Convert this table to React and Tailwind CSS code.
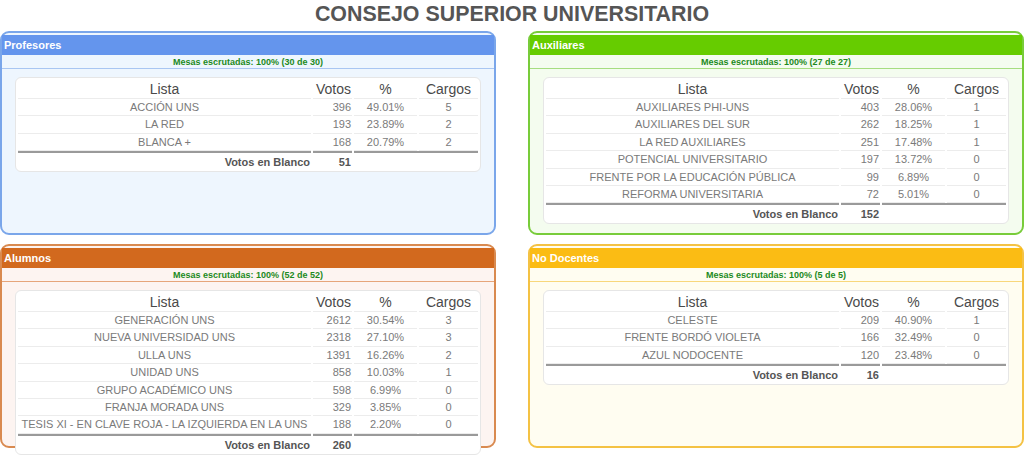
import React from "react";

const themes = {
  blue: {
    panel: "border-[#7aa6ea] bg-[#eef6fe]",
    header: "bg-[#6495ed]",
    line: "border-[#a9c6f2]",
  },
  green: {
    panel: "border-[#78cc3a] bg-[#f4fcef]",
    header: "bg-[#66cc00]",
    line: "border-[#a6dd80]",
  },
  orange: {
    panel: "border-[#d98a50] bg-[#fdf4f1]",
    header: "bg-[#d2691e]",
    line: "border-[#e6a57a]",
  },
  yellow: {
    panel: "border-[#f4c244] bg-[#fffdf1]",
    header: "bg-[#fbbc14]",
    line: "border-[#f8d77c]",
  },
};

const panels = [
  {
    title: "Profesores",
    theme: "blue",
    mesas: "Mesas escrutadas: 100% (30 de 30)",
    rows: [
      ["ACCIÓN UNS", 396, "49.01%", 5],
      ["LA RED", 193, "23.89%", 2],
      ["BLANCA +", 168, "20.79%", 2],
    ],
    blanco: 51,
  },
  {
    title: "Auxiliares",
    theme: "green",
    mesas: "Mesas escrutadas: 100% (27 de 27)",
    rows: [
      ["AUXILIARES PHI-UNS", 403, "28.06%", 1],
      ["AUXILIARES DEL SUR", 262, "18.25%", 1],
      ["LA RED AUXILIARES", 251, "17.48%", 1],
      ["POTENCIAL UNIVERSITARIO", 197, "13.72%", 0],
      ["FRENTE POR LA EDUCACIÓN PÚBLICA", 99, "6.89%", 0],
      ["REFORMA UNIVERSITARIA", 72, "5.01%", 0],
    ],
    blanco: 152,
  },
  {
    title: "Alumnos",
    theme: "orange",
    mesas: "Mesas escrutadas: 100% (52 de 52)",
    rows: [
      ["GENERACIÓN UNS", 2612, "30.54%", 3],
      ["NUEVA UNIVERSIDAD UNS", 2318, "27.10%", 3],
      ["ULLA UNS", 1391, "16.26%", 2],
      ["UNIDAD UNS", 858, "10.03%", 1],
      ["GRUPO ACADÉMICO UNS", 598, "6.99%", 0],
      ["FRANJA MORADA UNS", 329, "3.85%", 0],
      ["TESIS XI - EN CLAVE ROJA - LA IZQUIERDA EN LA UNS", 188, "2.20%", 0],
    ],
    blanco: 260,
  },
  {
    title: "No Docentes",
    theme: "yellow",
    mesas: "Mesas escrutadas: 100% (5 de 5)",
    rows: [
      ["CELESTE", 209, "40.90%", 1],
      ["FRENTE BORDÓ VIOLETA", 166, "32.49%", 0],
      ["AZUL NODOCENTE", 120, "23.48%", 0],
    ],
    blanco: 16,
  },
];

function Panel({ p }) {
  const t = themes[p.theme];
  return (
    <div className={`h-[204px] border-2 rounded-[9px] pt-[2px] ${t.panel}`}>
      <div
        className={`h-[20px] ${t.header} text-white font-bold text-[11px] leading-[21px] pl-[2px]`}
      >
        {p.title}
      </div>
      <div
        className={`h-[14px] border-b ${t.line} text-center text-[9px] leading-[15px] font-bold text-[#1d8a1d]`}
      >
        {p.mesas}
      </div>
      <div className="mt-[8px] mx-[13px] bg-white border border-[#e6e6e6] rounded-[6px] pb-[1px]">
        <table className="w-full table-fixed border-separate border-spacing-x-[2px] border-spacing-y-0">
          <colgroup>
            <col className="w-[293px]" />
            <col className="w-[39px]" />
            <col className="w-[63px]" />
            <col />
          </colgroup>
          <thead>
            <tr className="text-[14px] leading-[16px] text-[#4a4a4a]">
              <th className="font-normal text-center pt-[3px] pb-[1px] border-b border-[#ececec]">
                Lista
              </th>
              <th className="font-normal text-right pr-[1px] pt-[3px] pb-[1px] border-b border-[#ececec]">Votos</th>
              <th className="font-normal text-center pt-[3px] pb-[1px] border-b border-[#ececec]">%</th>
              <th className="font-normal text-center pt-[3px] pb-[1px] border-b border-[#ececec]">Cargos</th>
            </tr>
          </thead>
          <tbody className="text-[11px] leading-[16.4px] text-[#7a7a7a]">
            {p.rows.map((r, i) => (
              <tr key={i}>
                <td className="text-center whitespace-nowrap overflow-visible border-b border-[#ececec]">
                  {r[0]}
                </td>
                <td className="text-right pr-[1px] border-b border-[#ececec]">{r[1]}</td>
                <td className="text-center border-b border-[#ececec]">{r[2]}</td>
                <td className="text-center border-b border-[#ececec]">{r[3]}</td>
              </tr>
            ))}
            <tr className="font-bold text-[#555] leading-[15px]">
              <td className="text-right pr-[1px] pt-[2px] border-t-2 border-[#9a9a9a]">
                Votos en Blanco
              </td>
              <td className="text-right pr-[1px] pt-[2px] border-t-2 border-[#9a9a9a]">{p.blanco}</td>
              <td colSpan={2} className="border-t-2 border-[#9a9a9a]"></td>
            </tr>
          </tbody>
        </table>
      </div>
    </div>
  );
}

export default function App() {
  return (
    <div className="w-[1024px] h-[457px] overflow-hidden bg-white font-['Liberation_Sans',Arial,sans-serif]">
      <h1 className="text-center font-bold text-[21.4px] leading-[24px] text-[#555] pt-[2px] h-[31px]">
        CONSEJO SUPERIOR UNIVERSITARIO
      </h1>
      <div className="grid grid-cols-[496px_496px] gap-x-[32px] gap-y-[9px]">
        {panels.map((p) => (
          <Panel key={p.title} p={p} />
        ))}
      </div>
    </div>
  );
}
